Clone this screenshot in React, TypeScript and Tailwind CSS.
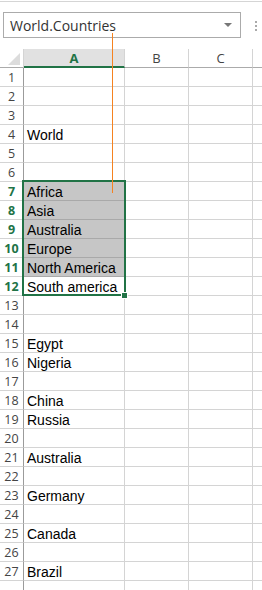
import React from 'react'

// cell values in column A, keyed by row number
const cells: Record<number, string> = {
    4: 'World',
    7: 'Africa',
    8: 'Asia',
    9: 'Australia',
    10: 'Europe',
    11: 'North America',
    12: 'South america',
    15: 'Egypt',
    16: 'Nigeria',
    18: 'China',
    19: 'Russia',
    21: 'Australia',
    23: 'Germany',
    25: 'Canada',
    27: 'Brazil',
}

const rows = Array.from({ length: 28 }, (_, i) => i + 1)

function Row({ n }: { n: number }) {
    const picked = n >= 7 && n <= 12
    const shaded = n >= 7 && n <= 11
    return (
        <div className="flex h-[19px]">
            <div
                className={
                    picked
                        ? 'w-[24px] shrink-0 border-r border-b border-r-[#9b9b9b] border-b-[#d4d4d4] text-center text-[12.5px] leading-[20px] font-bold text-[#217346]'
                        : 'w-[24px] shrink-0 border-r border-b border-r-[#9b9b9b] border-b-[#d4d4d4] text-center text-[12.5px] leading-[20px] text-[#444]'
                }
                style={{ fontFamily: '"Open Sans", sans-serif' }}
            >
                {n < 28 ? n : ''}
            </div>
            <div
                className={
                    shaded
                        ? 'w-[101px] shrink-0 border-r border-b border-r-[#d4d4d4] border-b-[#a9a9a9] bg-[#c6c6c6] pl-[3px] text-[14px] leading-[20px] text-black whitespace-nowrap'
                        : 'w-[101px] shrink-0 border-r border-b border-[#d4d4d4] pl-[3px] text-[14px] leading-[20px] text-black whitespace-nowrap'
                }
                style={{ fontFamily: '"Liberation Sans", Arial, sans-serif' }}
            >
                {cells[n] ?? ''}
            </div>
            <div className="w-[64px] shrink-0 border-r border-b border-[#d4d4d4]" />
            <div className="w-[64px] shrink-0 border-r border-b border-[#d4d4d4]" />
            <div className="flex-1 border-b border-[#d4d4d4]" />
        </div>
    )
}

export default function App() {
    return (
        <div className="relative h-[590px] w-[262px] overflow-hidden bg-white">
            {/* formula bar strip */}
            <div className="h-[48px] border-t border-[#d5d5d5] mt-px">
                <div className="flex items-start">
                    <div
                        className="ml-[3px] mt-[10px] flex h-[26px] w-[238px] items-center justify-between border border-[#ababab] pl-[6px] pr-[8px] text-[14px] text-[#333]"
                        style={{ fontFamily: '"Open Sans", sans-serif' }}
                    >
                        <span>World.Countries</span>
                        <span className="h-0 w-0 border-x-[4px] border-t-[4px] border-x-transparent border-t-[#777]" />
                    </div>
                    <div className="ml-[14px] mt-[19px] flex flex-col gap-[2px]">
                        <span className="h-[2px] w-[2px] bg-[#aaa]" />
                        <span className="h-[2px] w-[2px] bg-[#aaa]" />
                        <span className="h-[2px] w-[2px] bg-[#aaa]" />
                    </div>
                </div>
            </div>

            {/* column headers */}
            <div
                className="flex h-[19px] text-[13px] leading-[18px]"
                style={{ fontFamily: '"Open Sans", sans-serif' }}
            >
                <div className="relative w-[24px] shrink-0 border-r border-b border-r-[#d4d4d4] border-b-[#ababab]">
                    <svg className="absolute right-[3px] bottom-[2px]" width="12" height="12" viewBox="0 0 12 12">
                        <polygon points="12,0 12,12 0,12" fill="#dcdcdc" />
                    </svg>
                </div>
                <div className="w-[101px] shrink-0 border-r border-b-2 border-r-[#d4d4d4] border-b-[#217346] bg-[#e1e1e1] text-center font-bold text-[#217346]">
                    A
                </div>
                <div className="w-[64px] shrink-0 border-r border-b border-r-[#d4d4d4] border-b-[#ababab] text-center text-[#444]">
                    B
                </div>
                <div className="w-[64px] shrink-0 border-r border-b border-r-[#d4d4d4] border-b-[#ababab] text-center text-[#444]">
                    C
                </div>
                <div className="flex-1 border-b border-[#ababab]" />
            </div>

            {/* grid */}
            <div>
                {rows.map(n => (
                    <Row key={n} n={n} />
                ))}
            </div>

            {/* selection box A7:A12 */}
            <div className="absolute left-[22px] top-[180px] h-[116px] w-[104px] border-2 border-[#217346]" />
            <div className="absolute left-[122px] top-[293px] h-[5px] w-[5px] bg-[#217346] outline outline-1 outline-white" />

            {/* annotation line */}
            <div className="absolute left-[112px] top-[33px] h-[160px] w-px bg-[#f58220]" />
        </div>
    )
}
